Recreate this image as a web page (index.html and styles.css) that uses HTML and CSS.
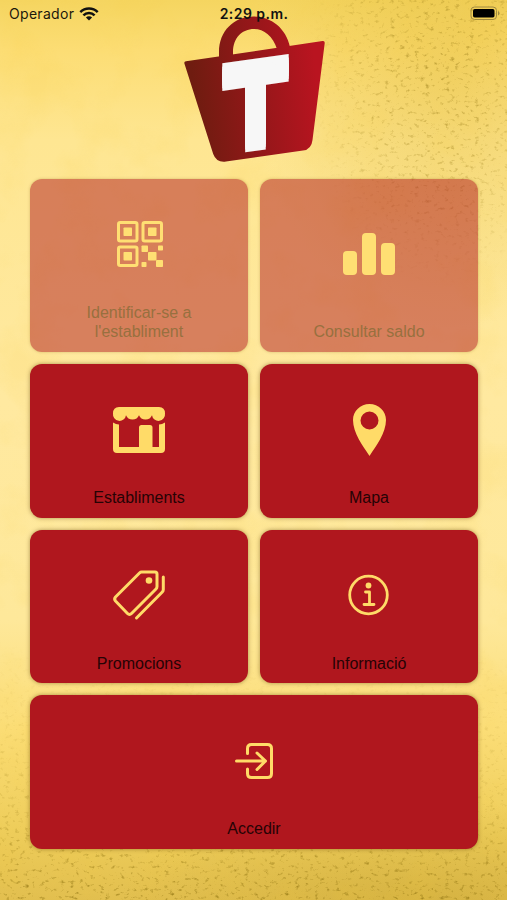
FILE: index.html
```
<!DOCTYPE html>
<html lang="ca">
<head>
    <meta charset="UTF-8">
    <meta name="viewport" content="width=device-width, initial-scale=1.0">
    <title>Inici</title>
    <link rel="stylesheet" href="styles.css">
</head>
<body>

    <!-- Paper texture -->
    <svg class="texture" width="507" height="900" viewBox="0 0 507 900" aria-hidden="true">
        <defs>
            <filter id="specks" x="0" y="0" width="100%" height="100%" color-interpolation-filters="sRGB">
                <feTurbulence type="fractalNoise" baseFrequency="0.2 0.26" numOctaves="3" seed="8"/>
                <feColorMatrix values="0 0 0 0 0.58  0 0 0 0 0.47  0 0 0 0 0.08  3.2 0 0 0 -1.9"/>
                <feGaussianBlur stdDeviation="0.5"/>
                <feComposite in2="SourceGraphic" operator="in"/>
            </filter>
            <filter id="clouds" x="0" y="0" width="100%" height="100%" color-interpolation-filters="sRGB">
                <feTurbulence type="fractalNoise" baseFrequency="0.018" numOctaves="4" seed="3"/>
                <feColorMatrix values="0 0 0 0 0.97  0 0 0 0 0.8  0 0 0 0 0.25  3 0 0 0 -1.4"/>
            </filter>
            <radialGradient id="fadeCorner" gradientUnits="userSpaceOnUse" cx="0" cy="0" r="1" gradientTransform="translate(440 70) scale(135 220)">
                <stop offset="0" stop-color="#000" stop-opacity="0.6"/>
                <stop offset="0.6" stop-color="#000" stop-opacity="0.35"/>
                <stop offset="1" stop-color="#000" stop-opacity="0"/>
            </radialGradient>
            <linearGradient id="fadeUp" x1="0" y1="0" x2="0" y2="1">
                <stop offset="0" stop-color="#000" stop-opacity="0"/>
                <stop offset="0.6" stop-color="#000" stop-opacity="0.25"/>
                <stop offset="1" stop-color="#000" stop-opacity="0.8"/>
            </linearGradient>
        </defs>
        <rect width="507" height="900" filter="url(#clouds)" opacity="0.12"/>
        <rect x="310" y="0" width="197" height="340" fill="url(#fadeCorner)" filter="url(#specks)"/>
        <rect x="0" y="640" width="507" height="260" fill="url(#fadeUp)" filter="url(#specks)"/>
    </svg>

    <div class="status-bar">
        <div class="carrier">
            <span>Operador</span>
            <svg width="20" height="14" viewBox="0 0 20 14" fill="none" stroke="#111" stroke-width="2.5">
                <path d="M1.3 5.1a12.3 12.3 0 0 1 17.4 0"/>
                <path d="M4.4 8.4a7.9 7.9 0 0 1 11.2 0"/>
                <path d="M10 13.6 6.9 10.5a4.4 4.4 0 0 1 6.2 0z" fill="#111" stroke="none"/>
            </svg>
        </div>
        <div class="time">2:29 p.m.</div>
        <div class="battery">
            <svg width="30" height="15" viewBox="0 0 30 15">
                <rect x="1" y="1" width="25.5" height="12.5" rx="3.5" fill="none" stroke="#a08a40" stroke-width="1"/>
                <rect x="3" y="3" width="21.5" height="8.5" rx="1.7" fill="#000"/>
                <path d="M28 5v4.5q1.5-.6 1.5-2.25T28 5z" fill="#a08a40"/>
            </svg>
        </div>
    </div>

    <!-- Logo -->
    <div class="logo">
        <svg width="144" height="148" viewBox="183 16 144 148">
            <defs>
                <linearGradient id="bag" gradientUnits="userSpaceOnUse" x1="195" y1="105" x2="318" y2="92">
                    <stop offset="0" stop-color="#6f1c10"/>
                    <stop offset="0.5" stop-color="#941719"/>
                    <stop offset="1" stop-color="#b91420"/>
                </linearGradient>
            </defs>
            <path d="M219 58V52C219 31 234 16.500 253.500 16.500C271 16.500 286 28 290 47L277 49C273 36 264 29 254 29C242 29 233 38 233 52V56Z" fill="url(#bag)"/>
            <path d="M186 61.300 322.500 41Q325 40.600 324.700 43.200L312.500 140Q311.500 149.500 303 150.600L226 161.600Q216.500 163 213.200 154L184.400 63.500Q183.900 61.700 186 61.300Z" fill="url(#bag)"/>
            <g transform="matrix(1.03 -0.147 0 1.12 223 143.500)" fill="#f7f7f7" stroke="#f7f7f7" stroke-width="5.500">
                <text id="mark" class="logo-mark" x="1" y="0">T</text>
                <use href="#mark" y="3"/>
                <use href="#mark" y="5.500"/>
                <use href="#mark" y="8"/>
            </g>
        </svg>
    </div>

    <div class="menu">
        <div class="card tall disabled">
            <div class="icon qr">
                <svg width="46" height="46" viewBox="0 0 46 46">
                    <g fill="none" stroke="#ffdf73" stroke-width="3">
                        <rect x="1.500" y="1.500" width="18.500" height="18.500" rx="1.800"/>
                        <rect x="26" y="1.500" width="18.500" height="18.500" rx="1.800"/>
                        <rect x="1.500" y="26" width="18.500" height="18.500" rx="1.800"/>
                    </g>
                    <g fill="#ffdf73">
                        <rect x="6.500" y="6.500" width="8.500" height="8.500" rx=".8"/>
                        <rect x="31" y="6.500" width="8.500" height="8.500" rx=".8"/>
                        <rect x="6.500" y="31" width="8.500" height="8.500" rx=".8"/>
                        <rect x="24.500" y="24.500" width="6.500" height="6.500" rx=".8"/>
                        <rect x="41" y="24.500" width="5" height="5" rx=".8"/>
                        <rect x="31" y="31" width="8.500" height="8.500" rx=".8"/>
                        <rect x="24.500" y="41" width="5" height="5" rx=".8"/>
                        <rect x="39" y="39" width="7" height="7" rx=".8"/>
                    </g>
                </svg>
            </div>
            <div class="label">Identificar-se a<br>l'establiment</div>
        </div>

        <div class="card tall disabled">
            <div class="icon saldo">
                <svg width="52" height="42" viewBox="0 0 52 42" fill="#ffdf73">
                    <rect x="0" y="18" width="14" height="24" rx="4"/>
                    <rect x="19" y="0" width="14" height="42" rx="4"/>
                    <rect x="38" y="10" width="14" height="32" rx="4"/>
                </svg>
            </div>
            <div class="label">Consultar saldo</div>
        </div>

        <div class="card">
            <div class="icon low">
                <svg width="52" height="46" viewBox="0 0 52 46" fill="#ffdb68">
                    <path d="M6 0H46Q52 0 52 6.500A6.500 6.500 0 0 1 39 8.200A6.900 6.400 0 0 1 26 8.200A6.900 6.400 0 0 1 13 8.200A6.500 6.500 0 0 1 0 6.500Q0 0 6 0Z"/>
                    <path d="M0 15.500Q3 17.500 6 17.500V40H26V20.500Q26 18 28.500 18H37Q39.500 18 39.500 20.500V40H46V17.500Q49 17.500 52 15.500V42Q52 46 48 46H4Q0 46 0 42Z"/>
                </svg>
            </div>
            <div class="label">Establiments</div>
        </div>

        <div class="card">
            <div class="icon low">
                <svg width="33" height="52" viewBox="0 0 33 52">
                    <path fill="#ffdb68" fill-rule="evenodd" d="M16.500 0C7.400 0 0 7.100 0 16C0 29 10 42 16.500 52C23 42 33 29 33 16C33 7.100 25.600 0 16.500 0ZM16.500 7.500a9 9 0 1 1 0 18a9 9 0 0 1 0-18Z"/>
                </svg>
            </div>
            <div class="label">Mapa</div>
        </div>

        <div class="card">
            <div class="icon">
                <svg width="52" height="50" viewBox="0 0 52 50" fill="none" stroke="#ffdb68" stroke-width="3" stroke-linecap="round" stroke-linejoin="round">
                    <path d="M28.500 2H42Q44 2 44 4V16.500Q44 18 43 19L18.500 43.500Q16.500 45.500 14.500 43.500L2.500 31Q.8 29 2.500 27L26.500 3Q27.500 2 28.500 2Z"/>
                    <circle cx="36" cy="10.500" r="3.300" fill="#ffdb68" stroke="none"/>
                    <path d="M50.300 7V19.500Q50.300 21 49.300 22L23.500 48"/>
                </svg>
            </div>
            <div class="label">Promocions</div>
        </div>

        <div class="card">
            <div class="icon">
                <svg width="42" height="42" viewBox="0 0 42 42" fill="none" stroke="#ffdb68" stroke-width="2.800" stroke-linecap="round" stroke-linejoin="round">
                    <circle cx="20.500" cy="21" r="18.800"/>
                    <circle cx="20.500" cy="11.500" r="2.900" fill="#ffdb68" stroke="none"/>
                    <path d="M17.500 18H21.500V30.500M16 30.500H26"/>
                </svg>
            </div>
            <div class="label">Informació</div>
        </div>

        <div class="card wide">
            <div class="icon low">
                <svg width="38" height="36" viewBox="0 0 38 36" fill="none" stroke="#ffdb68" stroke-width="3" stroke-linecap="round" stroke-linejoin="round">
                    <path d="M12.500 10.500V5.500Q12.500 1.500 16.500 1.500H32.500Q36.500 1.500 36.500 5.500V30.500Q36.500 34.500 32.500 34.500H16.500Q12.500 34.500 12.500 30.500V26"/>
                    <path d="M1.500 18H30.500M22 10L30.500 18L22 26.500"/>
                </svg>
            </div>
            <div class="label">Accedir</div>
        </div>
    </div>

</body>
</html>
```
FILE: styles.css
```
* {
    box-sizing: border-box;
    margin: 0;
    padding: 0;
}

body {
    width: 507px;
    height: 900px;
    overflow: hidden;
    position: relative;
    font-family: "Liberation Sans", Arial, sans-serif;
    background:
        radial-gradient(ellipse 200px 260px at 450px 70px, rgba(226, 188, 62, 0.45), rgba(226, 188, 62, 0)),
        radial-gradient(ellipse 300px 100px at 420px 900px, rgba(185, 150, 35, 0.3), rgba(185, 150, 35, 0)),
        linear-gradient(to bottom, #f5d560 0, #fcdd74 50px, #fee692 140px, #ffe9a0 400px, #fee89a 620px, #fbdd76 730px, #eecd5a 830px, #e2bf4f 900px);
}

svg {
    display: block;
    overflow: visible;
}

/* Lies behind everything else */
.texture {
    position: absolute;
    top: 0;
    left: 0;
    z-index: -1;
}

.status-bar {
    display: grid;
    grid-template-columns: 1fr auto 1fr;
    align-items: center;
    height: 27px;
    padding: 0 7px 0 9px;
    position: relative;
    z-index: 1;
    font-family: Inter, "Liberation Sans", sans-serif;
    font-size: 14px;
    color: #1b180c;
}

.carrier {
    display: flex;
    align-items: center;
    gap: 5px;
    letter-spacing: 0.3px;
}

.time {
    font-weight: 600;
    letter-spacing: 0.45px;
    padding-right: 1px;
    color: #111;
}

.battery {
    display: flex;
    justify-content: flex-end;
}

/* The bag handle goes up under the clock */
.logo {
    display: flex;
    justify-content: center;
    margin-top: -11px;
    padding-left: 3px;
}

.logo-mark {
    font-family: "Liberation Sans", Arial, sans-serif;
    font-size: 100px;
    line-height: 1;
    font-weight: bold;
}

.menu {
    display: grid;
    grid-template-columns: 1fr 1fr;
    gap: 12px;
    padding: 15px 29px 0 30px;
}

.card {
    display: flex;
    flex-direction: column;
    height: 153.5px;
    padding-bottom: 10.5px;
    border-radius: 12px;
    background-color: #b0171e;
    box-shadow: 0 0 4px rgba(90, 60, 0, 0.5);
}

.tall {
    height: 173px;
    padding-bottom: 11px;
}

.wide {
    grid-column: span 2;
}

.disabled {
    background-color: rgba(176, 23, 30, 0.5);
    box-shadow: 0 0 3px rgba(120, 80, 0, 0.3);
}

.icon {
    height: 130px;
    padding-top: 6px;
    display: flex;
    align-items: center;
    justify-content: center;
}

.low {
    padding-top: 8px;
}

.qr {
    padding-left: 1px;
}

.saldo {
    padding-top: 20px;
}

.label {
    margin-top: auto;
    text-align: center;
    font-size: 16px;
    line-height: 19px;
    color: #260305;
}

.disabled .label {
    color: #98703f;
}
```
